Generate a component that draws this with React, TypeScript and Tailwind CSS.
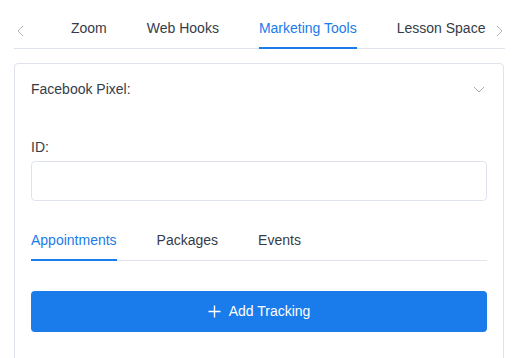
import React from "react";

const topTabs = ["Zoom", "Web Hooks", "Marketing Tools", "Lesson Space"];
const innerTabs = ["Appointments", "Packages", "Events"];

function Chevron({ dir, className }: { dir: "left" | "right" | "down"; className?: string }) {
  const d =
    dir === "left" ? "M7 1 L2 6 L7 11" : dir === "right" ? "M2 1 L7 6 L2 11" : "M1 3 L6 8 L11 3";
  const w = dir === "down" ? 12 : 9;
  return (
    <svg width={w} height="12" viewBox={`0 0 ${w} 12`} fill="none" className={className}>
      <path d={d} stroke="currentColor" strokeWidth="1" />
    </svg>
  );
}

export default function App() {
  return (
    <div className="w-[523px] h-[358px] overflow-hidden bg-white font-['Liberation_Sans',Arial,sans-serif] text-[14px] text-[#353c48]">
      {/* Top tabs */}
      <div className="flex items-center h-[49px] pt-[1px]">
        <div className="w-[14px] shrink-0" />
        <div className="relative flex-1 flex items-end h-full border-b border-[#dfe4ec]">
          <Chevron dir="left" className="absolute left-[2px] top-[24px] text-[#b0b6bf]" />
          <div className="flex pl-[57px] gap-[40px]">
            {topTabs.map((t) => (
              <div
                key={t}
                className={
                  t === "Marketing Tools"
                    ? "pb-[8px] border-b-2 border-[#1a7bea] -mb-[1px] text-[#1a7bea] whitespace-nowrap"
                    : "pb-[9px] whitespace-nowrap"
                }
              >
                {t}
              </div>
            ))}
          </div>
          <Chevron dir="right" className="absolute right-[1px] top-[24px] text-[#b0b6bf]" />
        </div>
        <div className="w-[18px] shrink-0" />
      </div>

      {/* Card */}
      <div className="mx-[14px] mt-[14px] w-[490px] h-[320px] border border-[#dfe4ec] rounded-[4px] px-[16px]">
        <div className="flex items-center justify-between h-[50px] pt-[1px]">
          <span>Facebook Pixel:</span>
          <Chevron dir="down" className="text-[#a5acb6] mr-[2px]" />
        </div>
        <div className="mt-[23px]">ID:</div>
        <div className="mt-[3px] h-[40px] border border-[#dfe4ec] rounded-[4px]" />

        <div className="mt-[29px] flex gap-[40px] border-b border-[#dfe4ec]">
          {innerTabs.map((t) => (
            <div
              key={t}
              className={
                t === "Appointments"
                  ? "pb-[8px] border-b-2 border-[#1a7bea] -mb-[1px] text-[#1a7bea]"
                  : "pb-[9px]"
              }
            >
              {t}
            </div>
          ))}
        </div>

        <button className="mt-[30px] w-full h-[41px] rounded-[4px] bg-[#1a7bea] text-white flex items-center justify-center gap-[8px]">
          <svg width="13" height="13" viewBox="0 0 13 13">
            <path d="M6.5 0.5 V12.5 M0.5 6.5 H12.5" stroke="white" strokeWidth="1.4" />
          </svg>
          <span>Add Tracking</span>
        </button>
      </div>
    </div>
  );
}
